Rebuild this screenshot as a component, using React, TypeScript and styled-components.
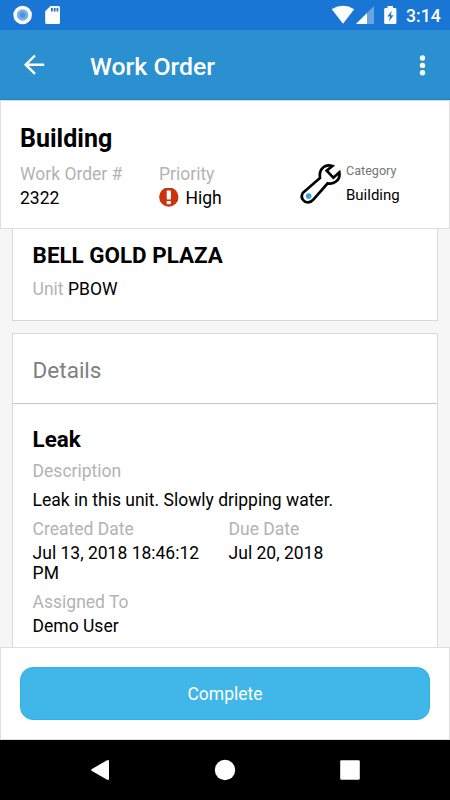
import React from "react";
import styled, { createGlobalStyle } from "styled-components";

const GlobalStyle = createGlobalStyle`
  * { box-sizing: border-box; }
  body { margin: 0; font-family: Roboto, "Liberation Sans", sans-serif; color: #000; background: #f6f6f6; }
`;

const Screen = styled.div`
  display: flex;
  flex-direction: column;
  width: 450px;
  height: 800px;
  overflow: hidden;
  background: #f6f6f6;
`;

const StatusBar = styled.div`
  display: flex;
  justify-content: space-between;
  flex: none;
  height: 30px;
  background: #1976d4;
  color: #fff;
`;

const StatusGroup = styled.div`
  display: flex;
`;

const Clock = styled.span`
  width: 45px;
  height: 30px;
  padding-left: 1px;
  font-size: 17.6px;
  font-weight: 500;
  line-height: 32px;
`;

const AppBar = styled.header`
  display: flex;
  align-items: center;
  flex: 0 0 70px;
  padding: 0 15px 0 20px;
  background: #2a90cf;
  border-bottom: 1px solid #1d83c2;
  color: #fff;
`;

const AppTitle = styled.h1`
  flex: 1;
  margin: 4px 0 0 41px;
  font-size: 24.8px;
  font-weight: 500;
  line-height: 30px;
`;

const Summary = styled.section`
  flex: 0 0 129px;
  padding: 21px 19px 0;
  background: #fff;
  border: 1px solid #dedede;
`;

const SummaryTitle = styled.h2`
  margin: 0;
  font-size: 25px;
  font-weight: 700;
  line-height: 34px;
`;

const SummaryRow = styled.div`
  display: flex;
  margin-top: 6px;
`;

const Column = styled.div<{ $width: number }>`
  width: ${(p) => p.$width}px;
`;

const Text = styled.div<{ $muted?: boolean; $line?: number }>`
  font-size: 17.5px;
  line-height: ${(p) => p.$line ?? 24}px;
  color: ${(p) => (p.$muted ? "#b3b3b3" : "#000")};
  white-space: nowrap;
`;

const PriorityValue = styled(Text)`
  display: flex;
  align-items: center;
  gap: 6.5px;
`;

const Category = styled.div`
  display: flex;
  svg { flex: none; }
`;

const CategoryText = styled.div`
  margin-left: 3px;
`;

const CategoryLabel = styled.div`
  font-size: 12.6px;
  line-height: 18px;
  color: #757575;
`;

const CategoryValue = styled.div`
  margin-top: 4px;
  font-size: 15px;
  line-height: 22px;
`;

const Content = styled.main`
  display: flex;
  flex-direction: column;
  gap: 12px;
  flex: 1;
  min-height: 0;
  overflow: hidden;
  padding: 0 12px;
`;

const Card = styled.section`
  flex: none;
  background: #fff;
  border: 1px solid #d9d9d9;
`;

const PropertyCard = styled(Card)`
  height: 92px;
  padding: 11px 19.6px;
  border-top: 0;
`;

const CardTitle = styled.h3`
  margin: 0;
  font-size: 22.4px;
  font-weight: 700;
  line-height: 30px;
`;

const UnitLine = styled(Text)`
  margin-top: 7px;
`;

const Muted = styled.span`
  color: #b3b3b3;
`;

const DetailsHeading = styled.div`
  height: 70px;
  padding: 2px 19.6px 0;
  border-bottom: 1px solid #c6c6c6;
  font-size: 22.5px;
  line-height: 68px;
  color: #808080;
`;

const DetailsBody = styled.div`
  padding: 20px 19.6px 40px;
`;

const Description = styled.div`
  padding-top: 1px;
`;

const DescriptionText = styled(Text)`
  margin-top: 1px;
`;

const Dates = styled.div`
  display: flex;
  margin-top: 5px;
`;

const DateValue = styled(Text)`
  white-space: normal;
  max-width: 180px;
  padding-top: 1.5px;
`;

const Assigned = styled.div`
  margin-top: 6.5px;
`;

const Footer = styled.footer`
  flex: 0 0 93px;
  padding: 19px;
  background: #fff;
  border: 1px solid #dedede;
`;

const CompleteButton = styled.button`
  display: block;
  width: 100%;
  height: 53px;
  padding: 0;
  border: 1px solid #2cb1e8;
  border-radius: 13px;
  background: #41b6e9;
  color: #fff;
  font: 400 17.5px Roboto, "Liberation Sans", sans-serif;
`;

const NavBar = styled.nav`
  display: flex;
  justify-content: center;
  align-items: center;
  gap: 105px;
  flex: 0 0 60px;
  background: #000;
`;

const StatusLeft = () => (
  <svg width="70" height="30" fill="#fff">
    <circle cx="22.6" cy="15" r="9.3" />
    <circle cx="22.6" cy="15" r="5.8" fill="#75aee8" />
    <circle cx="22.6" cy="15" r="2.7" fill="#4b93dc" />
    <path d="M50.5 6H58.4Q60 6 60 7.6V22.4Q60 24 58.4 24H46.8Q45.2 24 45.2 22.4V11.3Z" />
    <path d="M51 8h1.8v3.6H51zM53.8 8h1.8v3.6h-1.8zM56.5 8h1.8v3.6h-1.8z" fill="#1976d4" />
  </svg>
);

const StatusRight = () => (
  <svg width="73" height="30" viewBox="332 0 73 30" fill="#fff">
    <path d="M331.8 9.2Q343 2.3 354.2 9.2L343 23.8Z" />
    <path d="M374 6V24H356Z" fill="#66a4e2" />
    <path d="M367 13V24H356Z" />
    <path d="M387.5 6h5.5v2h2.2q1.2 0 1.2 1.2v13.6q0 1.2-1.2 1.2h-9.8q-1.2 0-1.2-1.2V9.2q0-1.2 1.2-1.2h2.1z" />
    <path d="M391.8 10.8 387.3 16.6h2.7l-1.2 5 4.8-6.3h-2.8z" fill="#1976d4" />
  </svg>
);

const BackArrow = () => (
  <svg width="29" height="29" viewBox="20 50 29 29" fill="none" stroke="#fff" strokeWidth="2.4">
    <path d="M44.2 64.7H26M35 55.5 25.7 64.7 35 73.9" />
  </svg>
);

const MoreDots = () => (
  <svg width="25" height="30" fill="#fff">
    <circle cx="12.5" cy="8" r="2.7" />
    <circle cx="12.5" cy="15.4" r="2.7" />
    <circle cx="12.5" cy="22.8" r="2.7" />
  </svg>
);

const AlertIcon = () => (
  <svg width="20" height="20">
    <circle cx="9.8" cy="9" r="9.7" fill="#cc330d" />
    <rect x="7.7" y="2.6" width="4.2" height="8.8" rx="0.7" fill="#fff" />
    <rect x="7.7" y="12.9" width="4.2" height="3.3" rx="0.7" fill="#fff" />
  </svg>
);

const Wrench = () => (
  <svg width="45" height="44" viewBox="205 155 135 132">
    <path
      d="M220 247 271 203Q268 181 281 171Q292 162 308 167L291 181 311 202 329 186Q332 203 320 213Q309 222 294 219L251 268Q241 280 226 274Q210 263 220 247Z"
      fill="#fff"
      stroke="#000"
      strokeWidth="8"
      strokeLinejoin="miter"
    />
    <circle cx="237" cy="257" r="8.5" fill="#36a0da" />
  </svg>
);

const NavIcons = () => (
  <>
    <svg width="20" height="20" fill="#fff" aria-label="Back">
      <path d="M16.7 0.4Q19 -0.7 19 1.3V18.7Q19 20.7 16.7 19.6L2 11Q0.4 10 2 9Z" />
    </svg>
    <svg width="20" height="20" viewBox="0 0 20 20" fill="#fff" overflow="visible" aria-label="Home">
      <circle cx="10" cy="10" r="10.2" />
    </svg>
    <svg width="20" height="20" fill="#fff" aria-label="Recents">
      <rect x="0.2" y="0.3" width="19.6" height="19.4" rx="1.2" />
    </svg>
  </>
);

export default function App() {
  return (
    <>
      <GlobalStyle />
      <Screen>
        <StatusBar>
          <StatusLeft />
          <StatusGroup>
            <StatusRight />
            <Clock>3:14</Clock>
          </StatusGroup>
        </StatusBar>
        <AppBar>
          <BackArrow />
          <AppTitle>Work Order</AppTitle>
          <MoreDots />
        </AppBar>
        <Summary>
          <SummaryTitle>Building</SummaryTitle>
          <SummaryRow>
            <Column $width={139}>
              <Text $muted>Work Order #</Text>
              <Text>2322</Text>
            </Column>
            <Column $width={139}>
              <Text $muted>Priority</Text>
              <PriorityValue>
                <AlertIcon />
                High
              </PriorityValue>
            </Column>
            <Category>
              <Wrench />
              <CategoryText>
                <CategoryLabel>Category</CategoryLabel>
                <CategoryValue>Building</CategoryValue>
              </CategoryText>
            </Category>
          </SummaryRow>
        </Summary>
        <Content>
          <PropertyCard>
            <CardTitle>BELL GOLD PLAZA</CardTitle>
            <UnitLine>
              <Muted>Unit</Muted> PBOW
            </UnitLine>
          </PropertyCard>
          <Card>
            <DetailsHeading>Details</DetailsHeading>
            <DetailsBody>
              <CardTitle>Leak</CardTitle>
              <Description>
                <Text $muted $line={32}>Description</Text>
                <DescriptionText>Leak in this unit. Slowly dripping water.</DescriptionText>
              </Description>
              <Dates>
                <Column $width={196}>
                  <Text $muted>Created Date</Text>
                  <DateValue $line={20.5}>Jul 13, 2018 18:46:12 PM</DateValue>
                </Column>
                <div>
                  <Text $muted>Due Date</Text>
                  <DateValue $line={20.5}>Jul 20, 2018</DateValue>
                </div>
              </Dates>
              <Assigned>
                <Text $muted>Assigned To</Text>
                <Text>Demo User</Text>
              </Assigned>
            </DetailsBody>
          </Card>
        </Content>
        <Footer>
          <CompleteButton>Complete</CompleteButton>
        </Footer>
        <NavBar>
          <NavIcons />
        </NavBar>
      </Screen>
    </>
  );
}
